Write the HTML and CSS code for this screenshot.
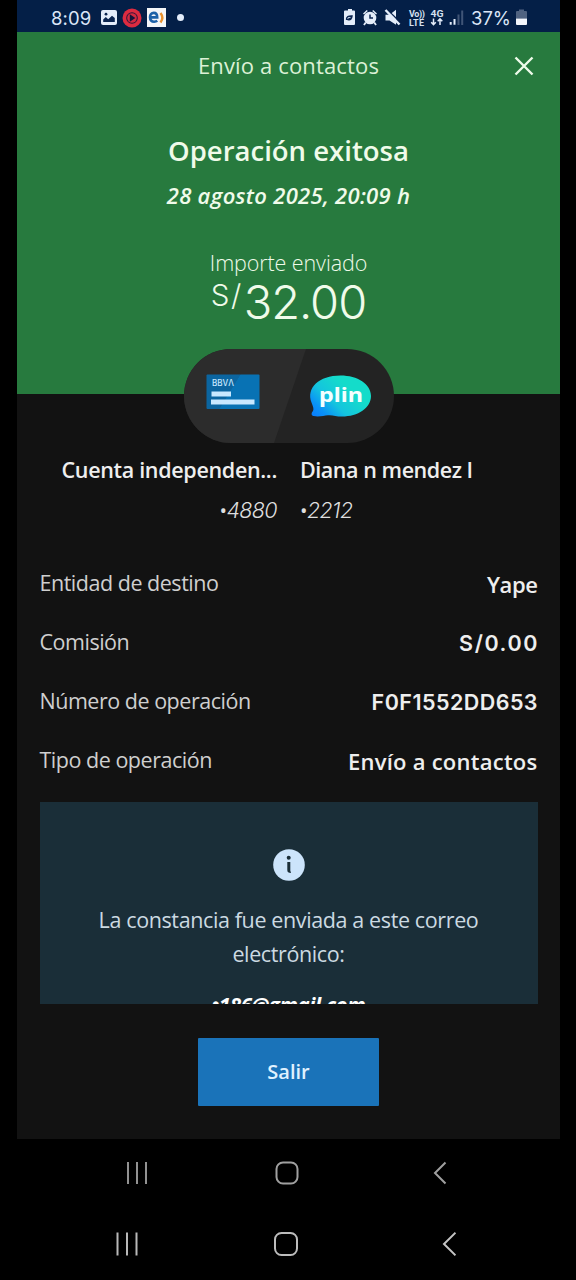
FILE: index.html
```
<!DOCTYPE html>
<html lang="es">
<head>
<meta charset="utf-8">
<title>Envío a contactos</title>
<link rel="stylesheet" href="styles.css">
</head>
<body>
<div class="phone">
  <div class="status">
    <div class="status-left">
      <span class="clock">8:09</span>
      <svg class="ic-photo" width="16" height="15" viewBox="0 0 16 15"><rect width="16" height="15" rx="2" fill="#e4edfa"/><path d="M2.2 12V9.500l2.600-2.500 2.400 2.200 3.800-3.400L13.800 8v4z" fill="#0b2550"/><circle cx="5" cy="4.200" r="1.400" fill="#0b2550"/></svg>
      <svg class="ic-play" width="20" height="20" viewBox="0 0 20 20"><circle cx="10" cy="10" r="9.500" fill="#dd2b40"/><circle cx="10" cy="10" r="5.800" fill="#2c1438"/><circle cx="10" cy="10" r="4.800" fill="#d42a40"/><path d="M7.800 6.300v7.400l5.600-3.700z" fill="#14163a"/></svg>
      <svg class="ic-e" width="19" height="19" viewBox="0 0 19 19"><rect width="19" height="19" fill="#f4f6f8"/><path d="M3 9.400h7.200C10.200 6.200 9 4.900 6.800 4.900 4.400 4.900 3 6.500 3 9.300c0 2.900 1.500 4.400 4.200 4.400 1.300 0 2.300-.300 3.100-.900" fill="none" stroke="#1d62a8" stroke-width="2.600"/><path d="M13.500 5c2.200 2.800 2.200 6.600 0 9.400" fill="none" stroke="#e8912d" stroke-width="2.400"/></svg>
      <span class="more"></span>
    </div>
    <div class="status-right">
      <svg width="184" height="24" viewBox="0 0 184 24">
        <g fill="#e4edfa">
          <path d="M3 5.500h2V4h4v1.500h2q1 0 1 1V19q0 1-1 1H2q-1 0-1-1V6.500q0-1 1-1z"/>
          <circle cx="27" cy="13" r="6.300"/><path d="M20 8.500l3.800-3.600 1 1.100-3.800 3.600zM34 8.500l-3.800-3.600-1 1.100 3.800 3.600zM22 17l-1.800 2.500 1.400 1 2-2.500zM32 17l1.800 2.500-1.400 1-2-2.500z"/>
          <path d="M42.500 9.800h4l6.500-5v15L46.500 15.500h-4z"/>
        </g>
        <path d="M3.500 14.500q0-3.800 5.500-3.500-.500 4.500-4 3.500l3-1.500" stroke="#0b2550" stroke-width="1.500" fill="none"/>
        <path d="M27 9.500V13h3" stroke="#0b2550" stroke-width="1.500" fill="none"/>
        <path d="M43.500 4L58 18" stroke="#061f48" stroke-width="1.500"/><path d="M42.500 5L56.500 19.500" stroke="#e4edfa" stroke-width="2.400"/>
        <text class="tiny" x="66" y="12" textLength="16">Vo))</text><text class="tiny" x="66" y="20.500" textLength="15">LTE</text>
        <text class="tiny" x="87.500" y="12" textLength="13" lengthAdjust="spacingAndGlyphs">4G</text>
        <path d="M90.500 13.500v6M88.200 17.300l2.300 2.300 2.300-2.300M97 20v-6M94.700 16.200l2.300-2.300 2.300 2.300" stroke="#e4edfa" stroke-width="1.500" fill="none"/>
        <path d="M107.700 17v2.800M111.500 14v5.800" stroke="#e4edfa" stroke-width="2"/><path d="M115.500 9.500V20M119.200 5.500V20" stroke="#405577" stroke-width="2"/>
        <text class="pct" x="128" y="20" textLength="40" lengthAdjust="spacingAndGlyphs">37%</text>
        <path d="M174 6h2V4.500h5V6h2q1 0 1 1v6.500h-11V7q0-1 1-1z" fill="#506381"/><path d="M173 13.500h11V19q0 1-1 1h-9q-1 0-1-1z" fill="#f3f6fb"/>
      </svg>
    </div>
  </div>

  <header class="hero">
    <div class="topbar">
      <span class="title">Envío a contactos</span>
      <svg class="close" width="20" height="20" viewBox="0 0 20 20"><path d="M1.500 1.500l17 17M18.500 1.500l-17 17" stroke="#eefbea" stroke-width="2.400"/></svg>
    </div>
    <h1 class="done">Operación exitosa</h1>
    <p class="date">28 agosto 2025, 20:09 h</p>
    <p class="caption">Importe enviado</p>
    <p class="amount"><span class="currency">S/</span><span class="value">32.00</span></p>
  </header>

  <svg class="pill" width="210" height="94" viewBox="0 0 210 94">
    <defs>
      <clipPath id="round"><rect width="210" height="94" rx="47"/></clipPath>
      <linearGradient id="aqua" x1="0" y1="1" x2="1" y2=".3"><stop offset="0" stop-color="#0878ff"/><stop offset=".2" stop-color="#0a92f6"/><stop offset=".42" stop-color="#14c4de"/><stop offset=".75" stop-color="#14dcca"/></linearGradient>
      <linearGradient id="blue" x1="0" y1="0" x2="1" y2=".4"><stop offset=".55" stop-color="#0b65a0"/><stop offset=".56" stop-color="#0872b4"/></linearGradient>
    </defs>
    <g clip-path="url(#round)"><rect width="210" height="94" fill="#232323"/><path d="M0 0h122L90 94H0z" fill="#2c2c2c"/></g>
    <rect x="22.500" y="25.500" width="53" height="34.500" rx="1" fill="url(#blue)"/>
    <text class="bank" x="28" y="37" textLength="22" lengthAdjust="spacingAndGlyphs">BBVΛ</text>
    <path d="M27.500 42.500h19.500v5H27.500zM27 50.500h43.500v5H27z" fill="#c8e8ff"/>
    <path d="M156.500 26.500c17 0 30.500 8.600 30.500 20.500s-13 20.500-29 20.500c-6 0-9-1.700-14-1.300-4 .300-9 2-14.500 .800-2.500-.600-2.300-3-.500-5 1.200-2.200-.200-5-1.500-8.500C122 39 135 26.500 156.500 26.500z" fill="url(#aqua)"/>
    <text class="plin" x="135" y="52.500" textLength="44" lengthAdjust="spacingAndGlyphs">plin</text>
  </svg>

  <section class="parties">
    <div class="from"><p class="name wide">Cuenta independen...</p><p class="acct"><span class="dot">•</span>4880</p></div>
    <div class="to"><p class="name">Diana n mendez l</p><p class="acct"><span class="dot">•</span>2212</p></div>
  </section>

  <dl class="details">
    <div class="row"><dt>Entidad de destino</dt><dd class="short">Yape</dd></div>
    <div class="row"><dt>Comisión</dt><dd class="figures fee">S/0.00</dd></div>
    <div class="row"><dt>Número de operación</dt><dd class="figures">F0F1552DD653</dd></div>
    <div class="row"><dt>Tipo de operación</dt><dd>Envío a contactos</dd></div>
  </dl>

  <section class="notice">
    <svg width="32" height="32" viewBox="0 0 32 32"><circle cx="16" cy="16" r="15.800" fill="#cce4fb"/><circle cx="15.700" cy="8.800" r="2" fill="#1a2e38"/><path d="M14.300 13h3v8.500l.700 2.500c-2.500 0-3.700-.700-3.700-3z" fill="#1a2e38"/></svg>
    <p class="message">La constancia fue enviada a este correo electrónico:</p>
    <p class="mail">•186@gmail.com</p>
  </section>

  <button class="exit">Salir</button>
</div>

<nav class="nav nav-inner">
  <svg width="22" height="24" viewBox="0 0 22 24"><path d="M2 1v22M11 1v22M20 1v22" stroke="#929292" stroke-width="2"/></svg>
  <svg width="24" height="24" viewBox="0 0 24 24"><rect x="1.500" y="1.500" width="21" height="21" rx="6.500" fill="none" stroke="#a0a0a0" stroke-width="2"/></svg>
  <svg width="14" height="24" viewBox="0 0 14 24"><path d="M12.500 1.500L2 12l10.500 10.500" fill="none" stroke="#a0a0a0" stroke-width="2"/></svg>
</nav>
<nav class="nav nav-outer">
  <svg width="22" height="24" viewBox="0 0 22 24"><path d="M1.500 .500v23M11 .500v23M20.500 .500v23" stroke="#b8b8b8" stroke-width="2"/></svg>
  <svg width="24" height="24" viewBox="0 0 24 24"><rect x="1" y="1" width="22" height="22" rx="6.500" fill="none" stroke="#bcbcbc" stroke-width="2"/></svg>
  <svg width="14" height="24" viewBox="0 0 14 24"><path d="M13.500 .700L2 12l11.500 11.300" fill="none" stroke="#c4c4c4" stroke-width="2"/></svg>
</nav>
</body>
</html>
```
FILE: styles.css
```
* { box-sizing: border-box; }
body { margin: 0; background: #000; font-family: "Open Sans", "Noto Sans", sans-serif; color: #eee; }
p, h1, dl, dd { margin: 0; }
svg { display: block; flex: none; }
.phone { width: 543px; height: 1139px; margin-left: 17px; background: #121212; display: flex; flex-direction: column; }

.status { height: 32px; background: #041f47; display: flex; justify-content: space-between; padding: 0 33px 0 34px; }
.status-left { display: flex; align-items: center; height: 35px; }
.clock { font-family: Inter, sans-serif; font-size: 18.500px; color: #dbe6f7; width: 50px; letter-spacing: .1px; }
.ic-play { margin-left: 5px; }
.ic-e { margin-left: 5px; }
.more { width: 7px; height: 7px; border-radius: 50%; background: #e4edfa; margin-left: 11px; }
.status-right { padding-top: 5px; }
.tiny { font: 700 9px Roboto, sans-serif; fill: #d5e0f0; }
.pct { font: 400 18.500px Inter, sans-serif; fill: #dbe6f7; }

.hero { height: 362px; background: #277a3e; color: #f0fbea; text-align: center; display: flex; flex-direction: column; }
.topbar { height: 65px; display: grid; grid-template-columns: 1fr auto 1fr; align-items: center; padding: 0 26px; }
.title { grid-column: 2; font-size: 22px; color: #dcf1d6; white-space: nowrap; letter-spacing: .15px; }
.close { justify-self: end; margin-top: 3px; }
.done { font-size: 27.500px; font-weight: 600; line-height: 36px; margin-top: 36px; }
.date { font-size: 22px; font-weight: 600; font-style: italic; line-height: 30px; margin-top: 11px; letter-spacing: .3px; }
.caption { font-size: 21.500px; font-weight: 300; line-height: 30px; margin-top: 38px; letter-spacing: -.1px; }
.amount { display: flex; justify-content: center; font-family: Inter, sans-serif; font-weight: 300; line-height: 48px; }
.currency { font-size: 29.500px; line-height: 35px; margin-right: 1px; letter-spacing: 1.500px; }
.value { font-size: 47px; letter-spacing: -1px; }

.pill { margin: -45px 0 0 167px; }
.bank { font: 500 8.500px Inter, sans-serif; fill: #c8e8ff; }
.plin { font: 700 20px "Noto Sans", sans-serif; fill: #f4ffff; }
.parties { display: grid; grid-template-columns: 260px 1fr; column-gap: 23px; margin-top: 12px; white-space: nowrap; }
.from { text-align: right; }
.name { font-size: 21.500px; font-weight: 600; line-height: 30px; letter-spacing: -.45px; }
.wide { letter-spacing: -.32px; }
.acct { font-family: Inter, sans-serif; font-size: 21.500px; font-weight: 300; font-style: italic; line-height: 30px; margin-top: 10px; letter-spacing: -.6px; color: #dedede; }
.dot { font: 400 20px/30px "Open Sans", sans-serif; }

.details { margin-top: 27px; padding: 0 22.500px; }
.row { height: 59px; display: flex; justify-content: space-between; line-height: 59px; white-space: nowrap; }
dt { font-size: 21.500px; color: #cfcfcf; letter-spacing: -.48px; }
dd { font-size: 22px; font-weight: 600; padding-top: 1.500px; letter-spacing: .25px; }
.short { letter-spacing: -.4px; }
.figures { font-family: Inter, sans-serif; font-size: 21.500px; letter-spacing: .45px; margin-right: -.500px; }
.fee { letter-spacing: 1.600px; margin-right: -1.500px; }

.notice { width: 498px; height: 202px; margin: 13px 0 0 22.500px; padding-top: 47px; background: #1a2e38; overflow: hidden; display: flex; flex-direction: column; align-items: center; flex: none; }
.message { width: 420px; margin-top: 22px; font-size: 21.500px; line-height: 34px; text-align: center; color: #ccdae2; letter-spacing: -.38px; }
.mail { margin-top: 16.500px; font-size: 20.500px; font-weight: 700; font-style: italic; line-height: 34px; color: #fff; letter-spacing: -.4px; }

.exit { width: 181px; height: 68px; margin: 34px 0 0 181px; border: 0; border-radius: 1px; background: #1a73b9; color: #e0f2ff; font: 600 20px "Open Sans", sans-serif; padding: 0 0 2px; }

.nav { display: grid; grid-template-columns: 1fr 24px 1fr; align-items: center; width: 576px; }
.nav svg:last-child { justify-self: end; }
.nav-inner { height: 68px; padding: 0 129px 0 126px; }
.nav-outer { height: 74px; padding: 0 120px 0 116px; }
```
